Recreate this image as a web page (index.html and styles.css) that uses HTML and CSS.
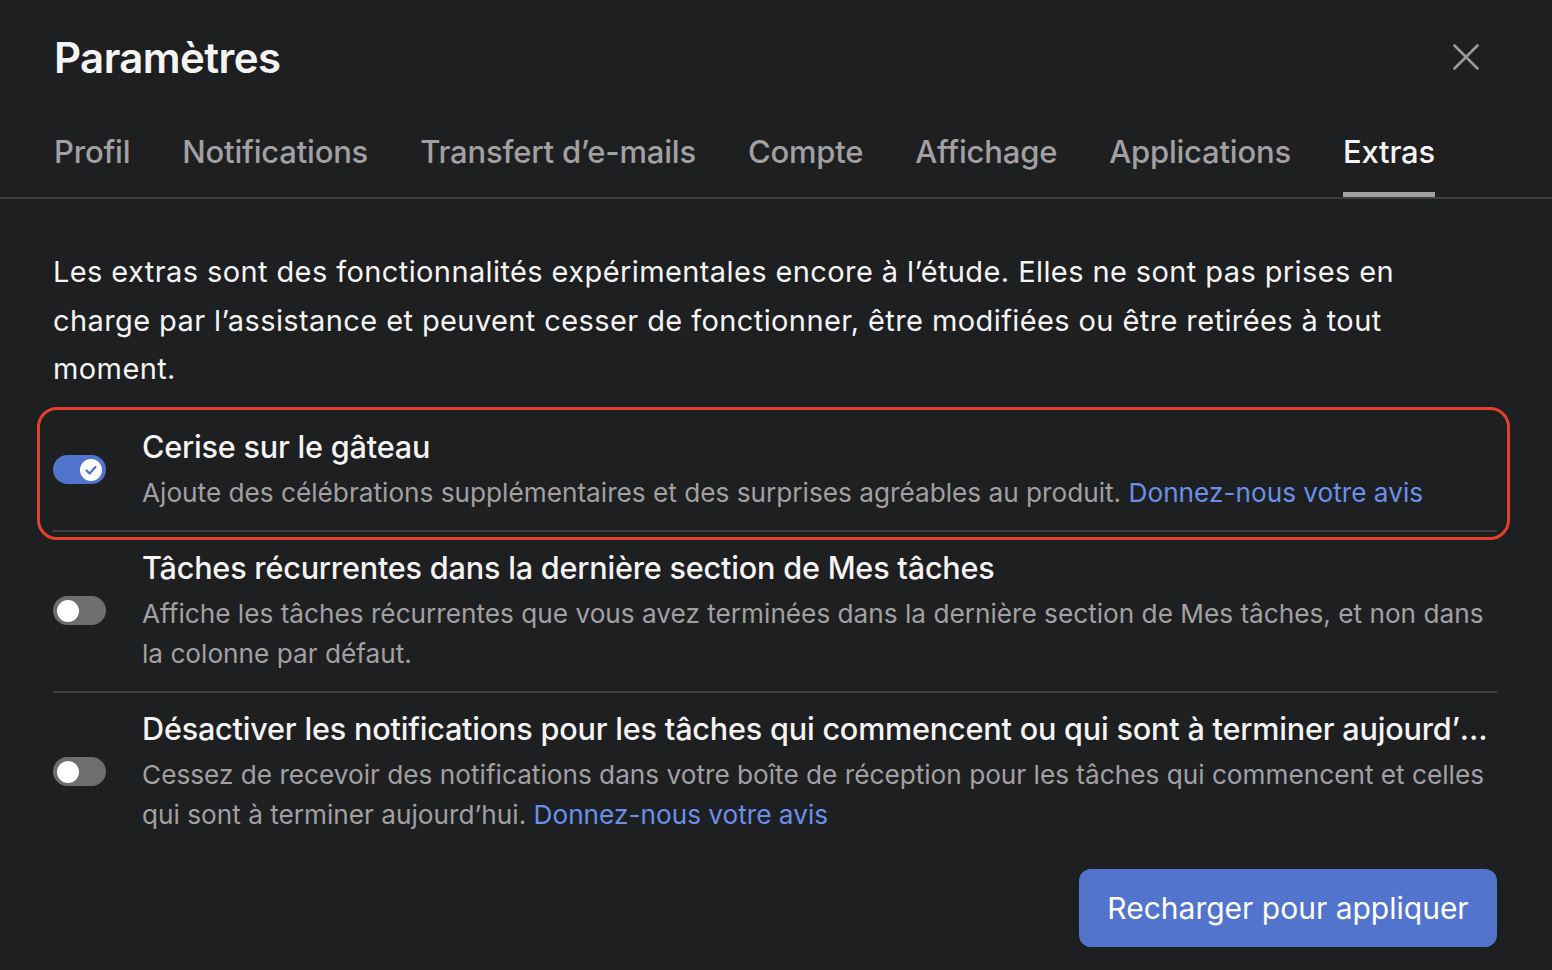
FILE: index.html
```html
<!DOCTYPE html>
<html lang="fr">
<head>
<meta charset="utf-8">
<title>Paramètres</title>
<link rel="stylesheet" href="styles.css">
</head>
<body>
<div class="dialog">
  <header class="header">
    <h1 class="title">Paramètres</h1>
    <button class="close" aria-label="Fermer">
      <svg width="26" height="26" viewBox="0 0 26 26"><path d="M1.5 1.5 L24.5 24.5 M24.5 1.5 L1.5 24.5" stroke="#9b9a9b" stroke-width="2.6" stroke-linecap="round" fill="none"/></svg>
    </button>
  </header>
  <nav class="tabs">
    <span class="tab">Profil</span>
    <span class="tab">Notifications</span>
    <span class="tab">Transfert d’e-mails</span>
    <span class="tab">Compte</span>
    <span class="tab">Affichage</span>
    <span class="tab">Applications</span>
    <span class="tab active">Extras</span>
  </nav>
  <main class="content">
    <p class="intro">Les extras sont des fonctionnalités expérimentales encore à l’étude. Elles ne sont pas prises en charge par l’assistance et peuvent cesser de fonctionner, être modifiées ou être retirées à tout moment.</p>
    <ul class="list">
      <li class="row highlighted">
        <span class="toggle on"><span class="knob"><svg width="22" height="22" viewBox="0 0 22 22"><path d="M6.5 11.5 L9.6 14.5 L15.5 8" stroke="#4f6fc9" stroke-width="2.2" stroke-linecap="round" stroke-linejoin="round" fill="none"/></svg></span></span>
        <div class="text">
          <div class="row-title">Cerise sur le gâteau</div>
          <div class="row-desc">Ajoute des célébrations supplémentaires et des surprises agréables au produit. <a class="link" href="#">Donnez-nous votre avis</a></div>
        </div>
      </li>
      <li class="row">
        <span class="toggle"><span class="knob"></span></span>
        <div class="text">
          <div class="row-title">Tâches récurrentes dans la dernière section de Mes tâches</div>
          <div class="row-desc">Affiche les tâches récurrentes que vous avez terminées dans la dernière section de Mes tâches, et non dans la colonne par défaut.</div>
        </div>
      </li>
      <li class="row last">
        <span class="toggle"><span class="knob"></span></span>
        <div class="text">
          <div class="row-title">Désactiver les notifications pour les tâches qui commencent ou qui sont à terminer aujourd’hui</div>
          <div class="row-desc">Cessez de recevoir des notifications dans votre boîte de réception pour les tâches qui commencent et celles qui sont à terminer aujourd’hui. <a class="link" href="#">Donnez-nous votre avis</a></div>
        </div>
      </li>
    </ul>
    <div class="actions">
      <button class="primary">Recharger pour appliquer</button>
    </div>
  </main>
</div>
</body>
</html>
```

FILE: styles.css
```css
* { box-sizing: border-box; }
html, body {
  margin: 0;
  padding: 0;
  background: #1e1f21;
  font-family: Inter, "Noto Sans", sans-serif;
  color: #f5f4f3;
}
.dialog {
  width: 1552px;
  height: 970px;
  overflow: hidden;
}
.header {
  height: 115px;
  display: flex;
  align-items: center;
  justify-content: space-between;
  padding: 0 73px 0 54px;
}
.title {
  margin: 0;
  font-size: 42px;
  font-weight: 600;
  letter-spacing: -0.6px;
  color: #f5f4f3;
}
.close {
  background: none;
  border: 0;
  padding: 0;
  width: 26px;
  height: 26px;
  display: flex;
  margin-top: -2px;
}
.tabs {
  height: 84px;
  display: flex;
  gap: 52px;
  padding: 0 54px;
  border-bottom: 2px solid #3e3e40;
}
.tab {
  display: flex;
  align-items: center;
  height: 82px;
  padding-bottom: 4px;
  font-size: 31px;
  font-weight: 500;
  color: #a2a0a2;
  letter-spacing: -0.2px;
  border-bottom: 5px solid transparent;
  margin-bottom: -2px;
}
.tab.active {
  color: #f5f4f3;
  border-bottom-color: #a2a0a2;
}
.content {
  padding: 49px 55px 0 53px;
}
.intro {
  margin: 0;
  font-size: 29px;
  line-height: 48.5px;
  color: #f5f4f3;
  letter-spacing: 0.4px;
}
.list {
  list-style: none;
  margin: 17px 0 0;
  padding: 0;
}
.row {
  position: relative;
  display: flex;
  align-items: center;
  gap: 36px;
  padding: 16px 0 17px;
  border-bottom: 2px solid #3e3e40;
}
.row.last { border-bottom: 0; }
.row.highlighted::after {
  content: "";
  position: absolute;
  top: -4px;
  left: -16px;
  right: -13px;
  bottom: -10px;
  border: 3px solid #e5402b;
  border-radius: 20px;
  pointer-events: none;
}
.toggle {
  flex: 0 0 53px;
  height: 29px;
  border-radius: 15px;
  background: #6e6e6f;
  display: flex;
  align-items: center;
  padding: 0 4px;
}
.toggle.on {
  background: #5174cd;
  justify-content: flex-end;
}
.knob {
  width: 22px;
  height: 22px;
  border-radius: 50%;
  background: #ffffff;
  display: flex;
}
.text {
  min-width: 0;
  flex: 1;
}
.row-title {
  font-size: 30.6px;
  line-height: 40px;
  font-weight: 500;
  color: #f5f4f3;
  letter-spacing: -0.2px;
  white-space: nowrap;
  overflow: hidden;
  text-overflow: ellipsis;
  margin-bottom: 6px;
}
.row-desc {
  font-size: 26.2px;
  line-height: 40px;
  color: #a2a0a2;
}
.link {
  color: #6b90e9;
  text-decoration: none;
}
.actions {
  display: flex;
  justify-content: flex-end;
  margin-top: 17px;
}
.primary {
  width: 418px;
  height: 78px;
  border: 0;
  border-radius: 12px;
  background: #5274cd;
  color: #ffffff;
  font-family: Inter, "Noto Sans", sans-serif;
  font-size: 30px;
  font-weight: 400;
}
```
